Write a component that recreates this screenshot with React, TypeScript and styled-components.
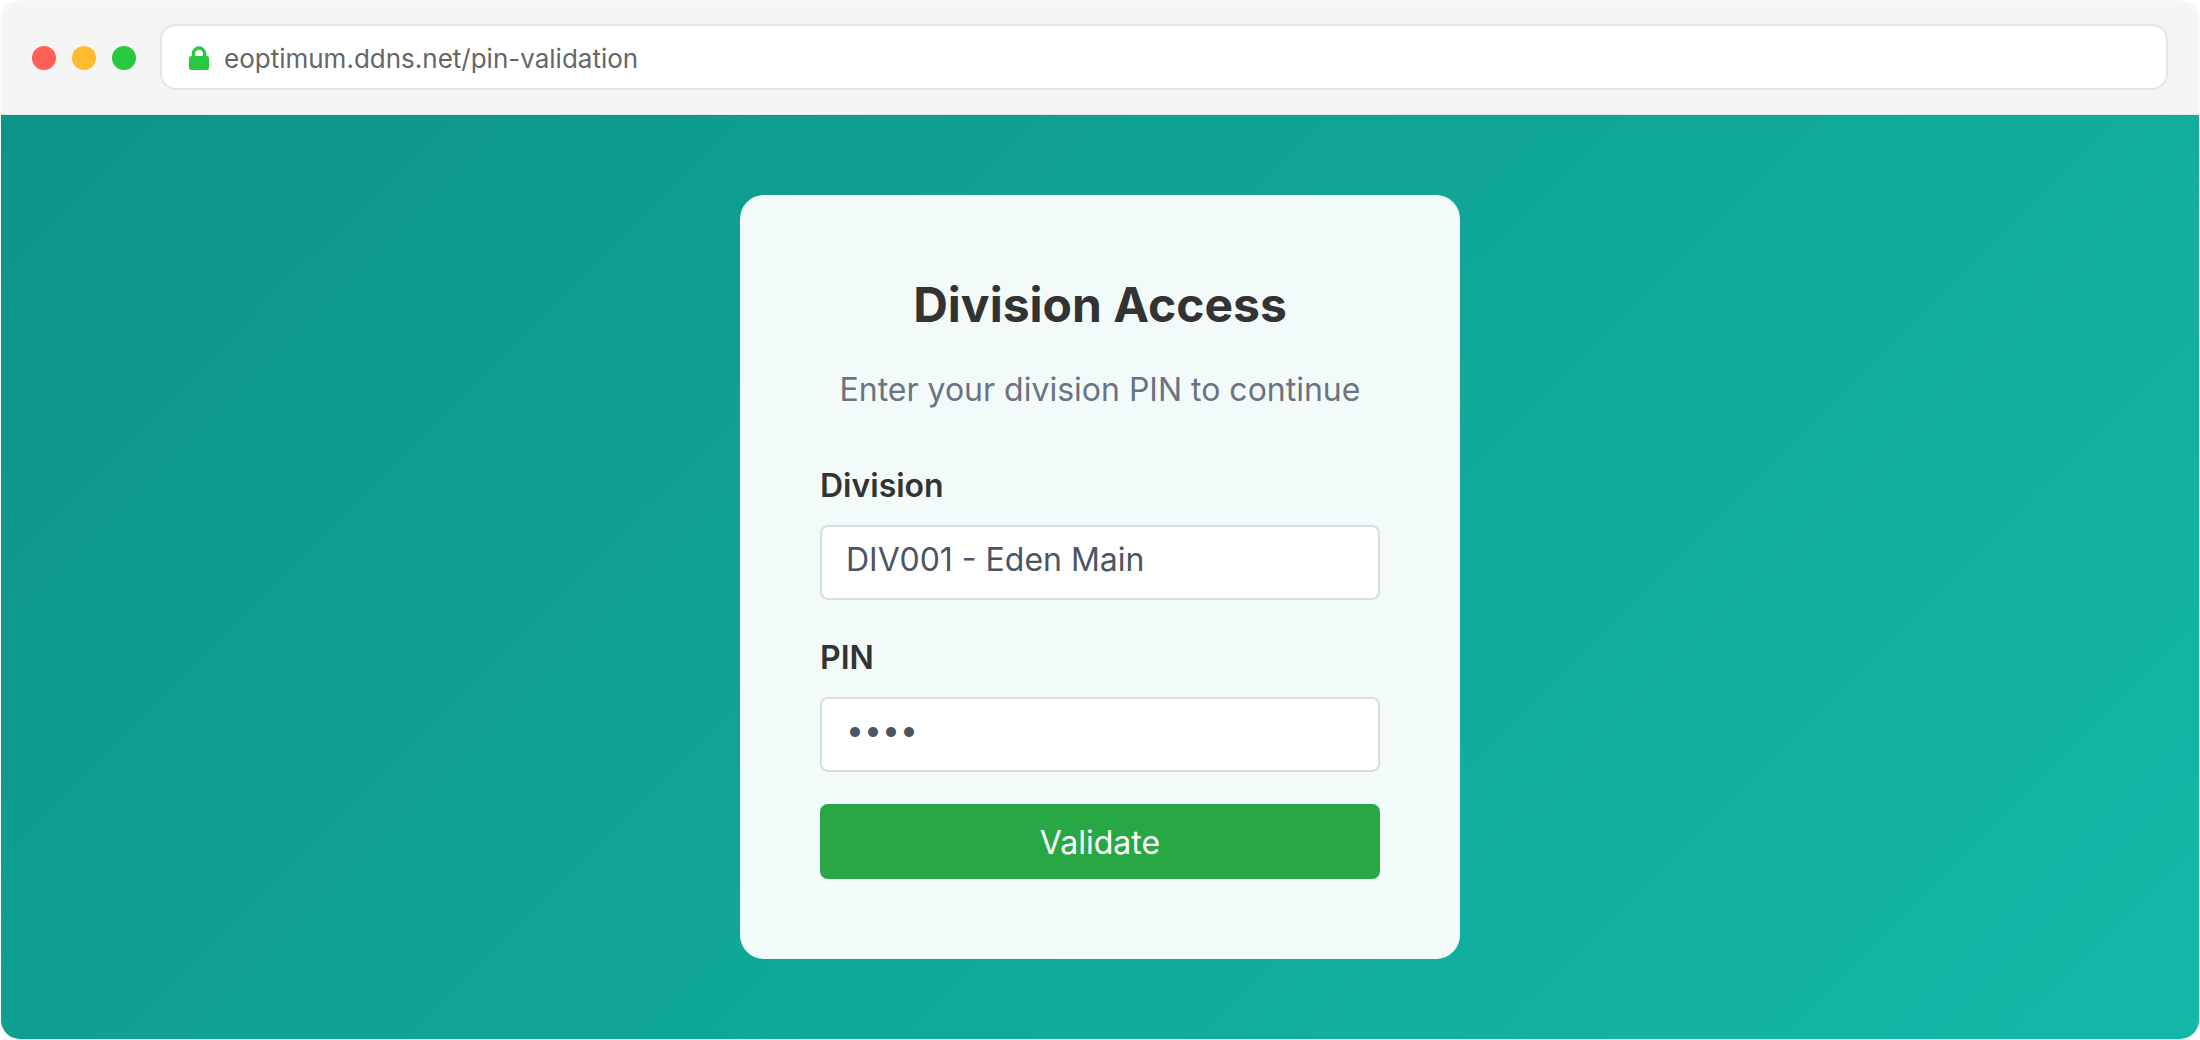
import React from 'react';
import styled, { createGlobalStyle } from 'styled-components';

const GlobalStyle = createGlobalStyle`
    html, body {
        margin: 0;
        padding: 0;
        background: #fff;
        font-family: Inter, "Liberation Sans", sans-serif;
    }
    * {
        box-sizing: border-box;
    }
`;
const BrowserWindow = styled.div`
    display: flex;
    flex-direction: column;
    width: 2200px;
    height: 1040px;
    border: 1px solid #fafafa;
    border-radius: 20px;
    overflow: hidden;
`;
const TopBar = styled.div`
    display: flex;
    align-items: center;
    gap: 24px;
    flex-shrink: 0;
    height: 114px;
    padding: 0 31px;
    background: #f5f5f5;
    border-bottom: 1px solid #e5e5e5;
`;
const Dots = styled.div`
    display: flex;
    gap: 16px;
    flex-shrink: 0;
`;
const Dot = styled.span<{ $color: string }>`
    width: 24px;
    height: 24px;
    border-radius: 50%;
    background: ${(p) => p.$color};
`;
const AddressBar = styled.div`
    display: flex;
    align-items: center;
    gap: 14px;
    flex-grow: 1;
    height: 66px;
    margin-top: -2px;
    padding: 3px 26px 0;
    background: #fff;
    border: 2px solid #e5e5e5;
    border-radius: 16px;
`;
const Url = styled.span`
    font-size: 26px;
    color: #666;
`;
const Main = styled.main`
    display: flex;
    align-items: center;
    justify-content: center;
    flex-grow: 1;
    background: linear-gradient(135deg, #0d9488 0%, #14b8a6 100%);
`;
const Card = styled.div`
    display: flex;
    flex-direction: column;
    width: 720px;
    height: 764px;
    padding: 80px;
    background: #f2fbfa;
    border-radius: 24px;
`;
const Title = styled.h1`
    margin: 0 0 31px;
    font-size: 48px;
    line-height: 59px;
    font-weight: 700;
    text-align: center;
    color: #333;
`;
const Subtitle = styled.p`
    margin: 0 0 45px;
    font-size: 32px;
    line-height: 50px;
    text-align: center;
    color: #6b7280;
`;
const Group = styled.div`
    display: flex;
    flex-direction: column;
    margin-bottom: 32px;
`;
const Label = styled.label`
    margin-bottom: 14px;
    font-size: 32px;
    line-height: 51px;
    font-weight: 600;
    color: #333;
`;
const Field = styled.div<{ $masked?: boolean }>`
    display: flex;
    align-items: center;
    height: 75px;
    padding: 0 24px ${(p) => (p.$masked ? '10px' : '6px')};
    background: #fff;
    border: 2px solid #d9dde2;
    border-radius: 8px;
    font-size: 32px;
    color: #4b5563;
`;
const Button = styled.button`
    height: 75px;
    padding: 2px 0 0;
    border: none;
    border-radius: 8px;
    background: #28a745;
    color: #fff;
    font-family: inherit;
    font-size: 32px;
`;

const LockIcon = () => (
    <svg width="22" height="24" viewBox="0 0 22 24">
        <path
            d="M5.5 11V7.5a5.5 5.5 0 0 1 11 0V11"
            fill="none"
            stroke="#28c840"
            strokeWidth="3.4"
        />
        <rect x="1" y="10" width="20" height="14" rx="2.5" fill="#28c840" />
    </svg>
);

const App = (): JSX.Element => {
    return (
        <BrowserWindow>
            <GlobalStyle />
            <TopBar>
                <Dots>
                    <Dot $color="#ff5f57" />
                    <Dot $color="#febc2e" />
                    <Dot $color="#28c840" />
                </Dots>
                <AddressBar>
                    <LockIcon />
                    <Url>eoptimum.ddns.net/pin-validation</Url>
                </AddressBar>
            </TopBar>
            <Main>
                <Card>
                    <Title>Division Access</Title>
                    <Subtitle>Enter your division PIN to continue</Subtitle>
                    <Group>
                        <Label>Division</Label>
                        <Field>DIV001 - Eden Main</Field>
                    </Group>
                    <Group>
                        <Label>PIN</Label>
                        <Field $masked>••••</Field>
                    </Group>
                    <Button>Validate</Button>
                </Card>
            </Main>
        </BrowserWindow>
    );
};

export default App;
